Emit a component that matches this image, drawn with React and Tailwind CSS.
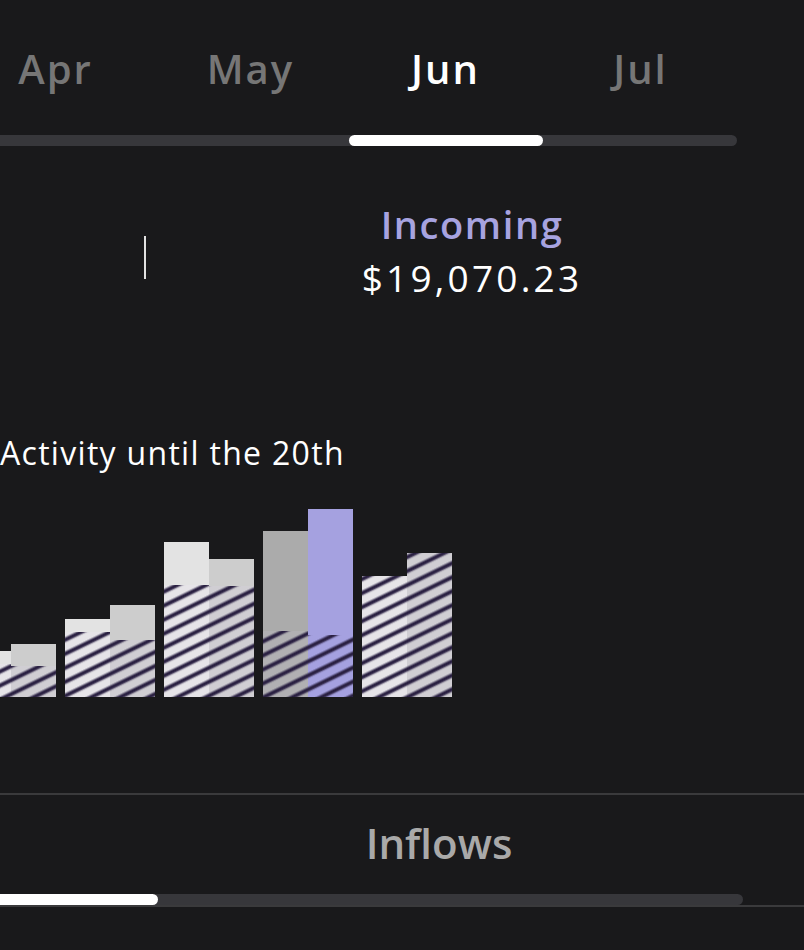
import React from "react";

const months = [
  { label: "Apr", active: false },
  { label: "May", active: false },
  { label: "Jun", active: true },
  { label: "Jul", active: false },
];

// Chart bars in chart coordinates (baseline at y = 197)
const BASE = 197;
const bars = [
  { x: -34, top: 151, hatch: 164, solid: "#e3e3e3", under: "#e6e4e8" },
  { x: 11, top: 144, hatch: 166, solid: "#cdcdcd", under: "#d0ced3" },
  { x: 65, top: 119, hatch: 132, solid: "#e3e3e3", under: "#e6e4e8" },
  { x: 110, top: 105, hatch: 140, solid: "#cdcdcd", under: "#d0ced3" },
  { x: 164, top: 42, hatch: 85, solid: "#e3e3e3", under: "#e6e4e8" },
  { x: 209, top: 59, hatch: 86, solid: "#cdcdcd", under: "#d0ced3" },
  { x: 263, top: 31, hatch: 131, solid: "#ababab", under: "#b1b0b3" },
  { x: 308, top: 9, hatch: 135, solid: "#a5a1e0", under: "#a5a1e0" },
  { x: 362, top: 76, hatch: 76, solid: "#e6e4e8", under: "#e6e4e8" },
  { x: 407, top: 53, hatch: 53, solid: "#d0ced3", under: "#d0ced3" },
];

function ActivityChart() {
  return (
    <svg width="804" height="200" viewBox="0 0 804 200" className="block">
      <defs>
        <pattern
          id="stripes"
          patternUnits="userSpaceOnUse"
          width="24"
          height="12.6"
          patternTransform="rotate(-26)"
        >
          <rect x="0" y="0" width="24" height="6" fill="#2a2042" opacity="0.22" />
          <rect x="0" y="0.8" width="24" height="4.4" fill="#2a2042" opacity="0.35" />
          <rect x="0" y="1.5" width="24" height="3" fill="#2a2042" />
        </pattern>
      </defs>
      {bars.map((b, i) => (
        <g key={i}>
          <rect x={b.x} y={b.top} width="45" height={b.hatch - b.top} fill={b.solid} />
          <rect x={b.x} y={b.hatch} width="45" height={BASE - b.hatch} fill={b.under} />
          <rect x={b.x} y={b.hatch} width="45" height={BASE - b.hatch} fill="url(#stripes)" />
        </g>
      ))}
    </svg>
  );
}

export default function App() {
  return (
    <div
      className="w-[804px] h-[950px] overflow-hidden bg-[#19191b] text-white"
      style={{ fontFamily: '"Open Sans", "Noto Sans", sans-serif' }}
    >
      {/* Month tabs */}
      <div className="pt-[49px] flex ml-[-42px]">
        {months.map((m) => (
          <div
            key={m.label}
            className={`w-[195px] shrink-0 text-center text-[40px] leading-none font-semibold tracking-[2px] ${
              m.active ? "text-white" : "text-[#767676]"
            }`}
          >
            {m.label}
          </div>
        ))}
      </div>
      <div className="mt-[46px] ml-[-20px] w-[757px] h-[11px] rounded-full bg-[#37373b]">
        <div className="ml-[369px] w-[194px] h-full rounded-full bg-white" />
      </div>

      {/* Totals */}
      <div className="mt-[59px] flex items-start">
        <div className="ml-[144px] mt-[31px] w-[2px] h-[43px] bg-[#e2e2e2]" />
        <div className="w-[652px] flex flex-col items-center">
          <div className="text-[38px] leading-none font-semibold tracking-[1.6px] text-[#a7a3e0]">Incoming</div>
          <div className="mt-[16px] text-[37px] leading-none tracking-[3.2px] text-white">$19,070.23</div>
        </div>
      </div>

      {/* Activity */}
      <div className="mt-[141px] text-[32px] leading-none tracking-[1.3px] text-white">Activity until the 20th</div>
      <div className="mt-[31px] h-[200px]">
        <ActivityChart />
      </div>

      {/* Flow tabs */}
      <div className="mt-[93px] h-[2px] bg-[#3a3a3c]" />
      <div className="mt-[27px] pl-[74px] text-center text-[42px] leading-none font-semibold text-[#a9a9a9]">
        Inflows
      </div>
      <div className="mt-[30px] ml-[-20px] w-[763px] h-[11px] rounded-full bg-[#37373b]">
        <div className="w-[178px] h-full rounded-full bg-white" />
      </div>
      <div className="h-[2px] bg-[#3a3a3c]" />
    </div>
  );
}
